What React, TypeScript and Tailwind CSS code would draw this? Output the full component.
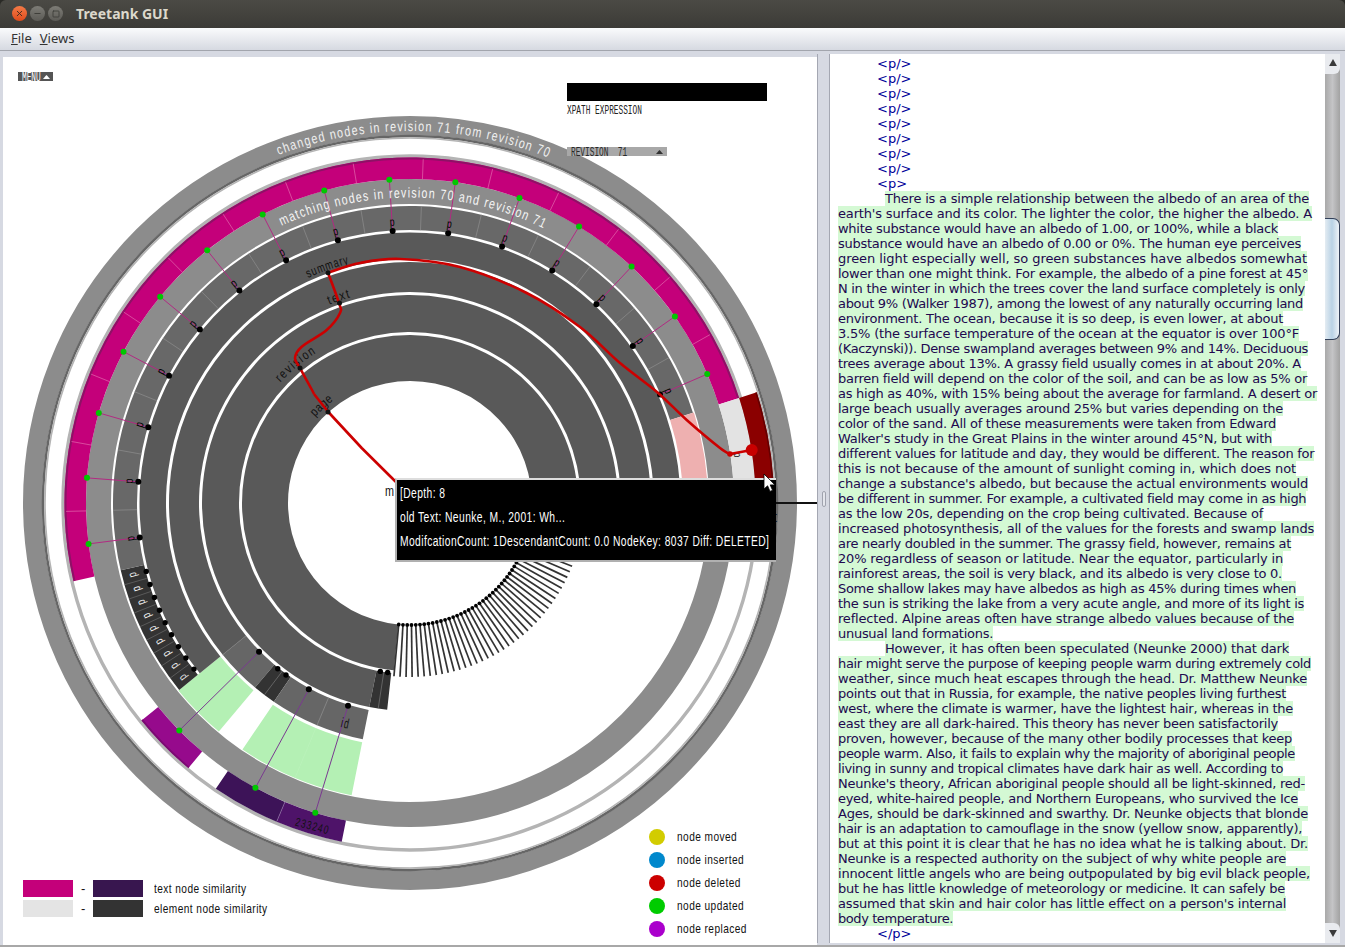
import React, { useLayoutEffect, useRef } from "react";
import { X, Minus, Square } from "lucide-react";

const NARROW = "font-['Liberation_Sans',sans-serif]";
const CX = 410;
const CY = 503;

function pt(r: number, t: number): [number, number] {
  const a = (t * Math.PI) / 180;
  return [CX + r * Math.sin(a), CY - r * Math.cos(a)];
}
function sector(r1: number, r2: number, a: number, b: number) {
  const large = b - a > 180 ? 1 : 0;
  const [x1, y1] = pt(r2, a);
  const [x2, y2] = pt(r2, b);
  const [x3, y3] = pt(r1, b);
  const [x4, y4] = pt(r1, a);
  return `M${x1} ${y1}A${r2} ${r2} 0 ${large} 1 ${x2} ${y2}L${x3} ${y3}A${r1} ${r1} 0 ${large} 0 ${x4} ${y4}Z`;
}
function smooth(p: [number, number][]) {
  let d = `M${p[0][0]} ${p[0][1]}`;
  for (let i = 0; i < p.length - 1; i++) {
    const p0 = p[Math.max(i - 1, 0)];
    const p1 = p[i];
    const p2 = p[i + 1];
    const p3 = p[Math.min(i + 2, p.length - 1)];
    d += `C${p1[0] + (p2[0] - p0[0]) / 6} ${p1[1] + (p2[1] - p0[1]) / 6} ${p2[0] - (p3[0] - p1[0]) / 6} ${p2[1] - (p3[1] - p1[1]) / 6} ${p2[0]} ${p2[1]}`;
  }
  return d;
}

function Sector({ r1, r2, a, b, fill }: { r1: number; r2: number; a: number; b: number; fill: string }) {
  return <path d={sector(r1, r2, a, b)} fill={fill} />;
}
function Radial({ r1, r2, t, stroke, w = 0.7 }: { r1: number; r2: number; t: number; stroke: string; w?: number }) {
  const [x1, y1] = pt(r1, t);
  const [x2, y2] = pt(r2, t);
  return <line x1={x1} y1={y1} x2={x2} y2={y2} stroke={stroke} strokeWidth={w} />;
}
function Dot({ r, t, size = 3, fill = "#000" }: { r: number; t: number; size?: number; fill?: string }) {
  const [x, y] = pt(r, t);
  return <circle cx={x} cy={y} r={size} fill={fill} />;
}
function RadialLabel({ r, t, text, fill = "#000", size = 12 }: { r: number; t: number; text: string; fill?: string; size?: number }) {
  const [x, y] = pt(r, t);
  return (
    <text
      fill={fill}
      fontSize={size}
      textAnchor="middle"
      dominantBaseline="middle"
      transform={`translate(${x} ${y}) rotate(${t}) scale(0.72 1)`}
      className={NARROW}
    >
      {text}
    </text>
  );
}
function ArcText({ id, text, r, c, size, fill, spacing, len }: { id: string; text: string; r: number; c: number; size: number; fill: string; spacing: number; len: number }) {
  const [x1, y1] = pt(r, c - 80);
  const [x2, y2] = pt(r, c + 80);
  const start = (r * 80 * Math.PI) / 180 - len / 2;
  return (
    <>
      <defs>
        <path id={id} d={`M${x1} ${y1}A${r} ${r} 0 0 1 ${x2} ${y2}`} />
      </defs>
      <text fill={fill} fontSize={size} style={{ letterSpacing: spacing }} className={NARROW}>
        <textPath href={`#${id}`} startOffset={start} textLength={len} lengthAdjust="spacingAndGlyphs">
          {text}
        </textPath>
      </text>
    </>
  );
}

const START = 256.9;
const STEP = 11.7;
const cellIdx = Array.from({ length: 15 }, (_, k) => k);
const smallStep = (256.9 - 231) / 9;
const smallIdx = Array.from({ length: 9 }, (_, k) => k);
const fan = Array.from({ length: 41 }, (_, k) => 185.3 - 2 * k);

function Chart() {
  return (
    <svg viewBox="3 57 814 888" width={814} height={888} className="absolute inset-0">
      {/* outer ring */}
      <circle cx={CX} cy={CY} r={377.5} fill="none" stroke="#8c8c8c" strokeWidth={19} />
      <circle cx={CX} cy={CY} r={367} fill="none" stroke="#666666" strokeWidth={2.5} />
      <circle cx={CX} cy={CY} r={365} fill="none" stroke="#b4b4b4" strokeWidth={1.6} />
      {/* grey edge line */}
      <circle cx={CX} cy={CY} r={347} fill="none" stroke="#b4b4b4" strokeWidth={3.4} />
      {/* r5 */}
      <circle cx={CX} cy={CY} r={311.5} fill="none" stroke="#8c8c8c" strokeWidth={25} />

      {/* magenta band */}
      <Sector r1={324} r2={345.5} a={START} b={432.3} fill="#c4007a" />
      <Sector r1={343.5} r2={345.5} a={START} b={432.3} fill="#8e1166" />
      <Sector r1={324} r2={345.5} a={72.3} b={98} fill="#e3e3e3" />
      <Sector r1={345.5} r2={364} a={72.3} b={98} fill="#8b0000" />
      <Sector r1={362.4} r2={364} a={72.3} b={98} fill="#640000" />
      <Sector r1={324} r2={345.5} a={219.9} b={231} fill="#960a8c" />
      <Sector r1={343.8} r2={345.5} a={219.9} b={231} fill="#7a0a72" />
      <Sector r1={324} r2={345.5} a={202.7} b={214.2} fill="#3d1358" />
      <Sector r1={324} r2={345.5} a={191.4} b={202.7} fill="#4e1369" />
      <Radial r1={324} r2={345} t={202.7} stroke="#8a6aa0" />

      {/* rings */}
      <Sector r1={244} r2={298} a={219.9} b={231} fill="#b4f0b4" />
      <Sector r1={244} r2={298} a={191.3} b={214.2} fill="#b4f0b4" />
      <Sector r1={273} r2={297} a={231} b={START} fill="#333333" />
      <Sector r1={273} r2={297} a={START} b={432.3} fill="#686868" />
      <Sector r1={273} r2={298} a={72.3} b={100} fill="#eeb0b0" />
      <Sector r1={244} r2={270.5} a={231} b={460} fill="#595959" />
      <Sector r1={211} r2={241} a={231} b={460} fill="#595959" />
      <Sector r1={211} r2={241} a={220} b={231} fill="#666666" />
      <Sector r1={211} r2={241} a={214.4} b={220} fill="#333333" />
      <Sector r1={211} r2={241} a={191.3} b={214.4} fill="#666666" />
      <Radial r1={211} r2={241} t={202.7} stroke="#909090" />
      <Radial r1={211} r2={241} t={217.2} stroke="#777777" />
      <Radial r1={211} r2={241} t={231} stroke="#777777" />
      <Sector r1={171} r2={208} a={191.3} b={460} fill="#595959" />
      <Sector r1={171} r2={208} a={186.3} b={191.3} fill="#333333" />
      <Radial r1={171} r2={208} t={188.8} stroke="#777777" />
      <Sector r1={122} r2={168} a={185.5} b={465} fill="#595959" />
      <Radial r1={244} r2={298} t={225.4} stroke="#bcf2bc" />
      <Radial r1={244} r2={298} t={202.7} stroke="#bcf2bc" />

      {/* fan */}
      {fan.map((t) => (
        <g key={t}>
          <Radial r1={122} r2={174} t={t} stroke="#333333" w={1.7} />
          <Dot r={122} t={t} size={1.9} />
        </g>
      ))}
      <Dot r={171} t={190} size={2.7} />
      <Dot r={171} t={187.5} size={2.7} />

      {/* separators */}
      {Array.from({ length: 14 }, (_, k) => START + STEP * (k + 1)).map((t) => (
        <g key={t}>
          <Radial r1={273} r2={297} t={t} stroke="#8e8e8e" />
          <Radial r1={324} r2={344} t={t} stroke="#e268ae" />
        </g>
      ))}
      {smallIdx.slice(1).map((k) => (
        <Radial key={k} r1={274} r2={297} t={231 + k * smallStep} stroke="#6a6a6a" />
      ))}

      {/* connections */}
      {cellIdx.map((k) => {
        const t = START + STEP * (k + 0.5);
        const [x1, y1] = pt(272.5, t);
        const [x2, y2] = pt(324, t);
        return (
          <g key={k}>
            <line x1={x1} y1={y1} x2={x2} y2={y2} stroke="#b22a82" strokeWidth={1} />
            <RadialLabel r={281} t={t} text="p" />
            <Dot r={272.5} t={t} />
            <Dot r={324} t={t} fill="#00c800" />
          </g>
        );
      })}
      {smallIdx.map((k) => {
        const t = 231 + (k + 0.5) * smallStep;
        return (
          <g key={k}>
            <RadialLabel r={286} t={t} text="p" fill="#eeeeee" />
            <Dot r={272.5} t={t} size={2.7} />
          </g>
        );
      })}
      {[225.4, 208.5, 197].map((t) => (
        <g key={t}>
          <Radial r1={212} r2={324} t={t} stroke="#7a3a90" w={1} />
          <Dot r={212} t={t} />
          <Dot r={324} t={t} fill="#00c800" />
        </g>
      ))}
      <Dot r={212} t={218.6} size={2.7} />
      <Dot r={212} t={215.8} size={2.7} />

      {/* labels */}
      <ArcText id="a1" text="changed nodes in revision 71  from revision 70" r={372} c={0.6} size={14} fill="#f0f0f0" spacing={1.6} len={277} />
      <ArcText id="a2" text="matching nodes in revision 70 and revision 71" r={305.5} c={0.6} size={14} fill="#f6f6f6" spacing={1.6} len={272} />
      <ArcText id="a3" text="summary" r={247} c={-19.3} size={13} fill="#111" spacing={1.2} len={44} />
      <ArcText id="a4" text="text" r={214} c={-19} size={13} fill="#111" spacing={2} len={24} />
      <ArcText id="a5" text="revision" r={177} c={-39.4} size={13} fill="#111" spacing={2} len={48} />
      <ArcText id="a6" text="page" r={128} c={-42.3} size={13} fill="#111" spacing={0.8} len={25.5} />
      <text x={341} y={728} fontSize={14} fill="#111" transform="rotate(12 345 724)" className={NARROW} style={{ letterSpacing: 2 }} textLength={9} lengthAdjust="spacingAndGlyphs">
        id
      </text>
      <text x={295} y={830} fontSize={12} fill="#111" transform="rotate(15 312 826)" className={NARROW} style={{ letterSpacing: 1.6 }} textLength={35} lengthAdjust="spacingAndGlyphs">
        233240
      </text>
      <text x={385} y={496} fontSize={14} fill="#111" className={NARROW} textLength={9} lengthAdjust="spacingAndGlyphs">
        m
      </text>
      <text x={773} y={522} fontSize={14} fill="#111" className={NARROW}>
        t
      </text>
      <text fontSize={11} fill="#111" textAnchor="middle" dominantBaseline="middle" transform="translate(737 455) rotate(83) scale(0.72 1)" className={NARROW}>
        p
      </text>
      <line x1={770} y1={503} x2={817} y2={503} stroke="#111" strokeWidth={2} />

      {/* red path */}
      <g fill="none" stroke="#cc0000" strokeWidth={2.6} strokeLinejoin="round">
        <path d="M400 486L361.7 448L328.3 412L314 394" />
        <path
          d={smooth([
            [314, 394],
            [312, 390],
            [300, 368],
            [295, 358],
            [301.7, 346.7],
            [326.7, 330],
            [340, 313],
            [339, 303],
            [328, 272.7],
          ])}
        />
        <path
          d={smooth([
            [328, 272.7],
            [360, 263],
            [400, 259],
            [460, 267],
            [526.7, 293],
            [580, 327],
            [620, 363],
            [656.7, 391.7],
            [686.7, 420],
            [720, 448],
            [730, 454],
          ])}
        />
        <path d="M730 454L751.7 450" />
      </g>
      <circle cx={751.7} cy={450} r={6} fill="#c80000" />
      <circle cx={730} cy={454} r={2.8} fill="#cc0000" />
      <circle cx={328} cy={272.7} r={2.5} fill="#111" />
      <circle cx={339.5} cy={303} r={2.5} fill="#111" />
      <circle cx={300} cy={368} r={2.5} fill="#111" />
      <circle cx={328} cy={412} r={2.5} fill="#111" />
    </svg>
  );
}

function Caret({ fill = "#fff" }: { fill?: string }) {
  return (
    <svg width={7} height={4} viewBox="0 0 7 4">
      <path d="M0 4L2.5 1L3.5 0L4.5 1L7 4Z" fill={fill} />
    </svg>
  );
}

const mono = "block font-['Liberation_Mono',monospace] text-[12px] origin-left scale-x-[0.65] translate-y-[2px] whitespace-pre leading-[9px]";
const squeeze = "inline-block origin-left scale-x-[0.78] whitespace-pre";
const squeezeTip = "block origin-left scale-x-[0.735] whitespace-pre";

const legend2: [string, string][] = [
  ["#d2cc00", "node moved"],
  ["#0088cc", "node inserted"],
  ["#cc0000", "node deleted"],
  ["#00cc00", "node updated"],
  ["#aa00cc", "node replaced"],
];

function Canvas() {
  return (
    <div className="relative ml-[3px] mt-[6px] h-[888px] w-[814px] shrink-0 overflow-hidden bg-white">
      <Chart />

      <div className="absolute left-[15px] top-[15px] flex h-[9px] w-[35px] items-center bg-[#555555] pl-[4px] text-white">
        <span className={`${mono} w-[21px] shrink-0`}>MENU</span>
        <Caret />
      </div>

      <div className="absolute left-[564px] top-[26px] flex w-[200px] flex-col">
        <div className="h-[18px] bg-black" />
        <div className="mt-[4px] h-[9px] text-[#222]">
          <span className={mono}>XPATH EXPRESSION</span>
        </div>
      </div>

      <div className="absolute left-[564px] top-[90px] flex h-[9px] w-[100px] items-center justify-between bg-[#a8a8a8] pl-[4px] pr-[4px] text-[#2a2a2a]">
        <span className={`${mono} w-[60px] shrink-0`}>REVISION  71</span>
        <Caret fill="#333" />
      </div>

      <div
        className={`absolute left-[392px] top-[421px] flex h-[84px] w-[381px] flex-col border-b-2 border-l-2 border-t-2 border-b-[#b0b0b0] border-l-[#b0b0b0] border-t-[#dddddd] bg-black pl-[3px] text-[14px] leading-[24px] tracking-[0.55px] text-white ${NARROW}`}
      >
        <div className="h-[24px] w-[360px] pt-[1px]">
          <span className={squeezeTip}>[Depth: 8</span>
        </div>
        <div className="h-[24px] w-[360px] pt-[1px]">
          <span className={squeezeTip}>old Text: Neunke, M., 2001: Wh...</span>
        </div>
        <div className="h-[24px] w-[360px] pt-[1px]">
          <span className={squeezeTip}>ModifcationCount: 1DescendantCount: 0.0 NodeKey: 8037 Diff: DELETED]</span>
        </div>
      </div>

      <svg width={14} height={20} viewBox="0 0 14 20" className="absolute left-[760px] top-[416px]">
        <path d="M1 1V16L4.6 12.8L7 18.4L9.6 17.3L7.2 11.9H12Z" fill="#fff" stroke="#000" strokeWidth={0.8} />
      </svg>

      <div className={`absolute left-[20px] top-[823px] flex flex-col gap-[3px] text-[13px] tracking-[0.55px] text-[#111] ${NARROW}`}>
        {[
          ["#c4007a", "#38164f", "text node similarity"],
          ["#e4e4e4", "#333333", "element node similarity"],
        ].map(([a, b, t]) => (
          <div key={t} className="flex h-[17px] items-center">
            <div className="h-[17px] w-[50px] shrink-0" style={{ backgroundColor: a }} />
            <div className="w-[20px] shrink-0 pl-[1px] text-center">-</div>
            <div className="h-[17px] w-[50px] shrink-0" style={{ backgroundColor: b }} />
            <div className="ml-[11px] shrink-0">
              <span className={squeeze}>{t}</span>
            </div>
          </div>
        ))}
      </div>

      <div className={`absolute left-[646px] top-[772px] flex flex-col gap-[7px] text-[13px] tracking-[0.55px] text-[#111] ${NARROW}`}>
        {legend2.map(([c, t]) => (
          <div key={t} className="flex h-[16px] items-center gap-[12px]">
            <div className="h-[16px] w-[16px] rounded-full" style={{ backgroundColor: c }} />
            <span className={squeeze}>{t}</span>
          </div>
        ))}
      </div>
    </div>
  );
}

const tags = ["<p/>", "<p/>", "<p/>", "<p/>", "<p/>", "<p/>", "<p/>", "<p/>", "<p>"];
// each line with the x at which it ends in the picture
const para1: [string, number][] = [
  ["There is a simple relationship between the albedo of an area of the", 1309],
  ["earth's surface and its color. The lighter the color, the higher the albedo. A", 1312],
  ["white substance would have an albedo of 1.00, or 100%, while a black", 1278],
  ["substance would have an albedo of 0.00 or 0%. The human eye perceives", 1301],
  ["green light especially well, so green substances have albedos somewhat", 1307],
  ["lower than one might think. For example, the albedo of a pine forest at 45°", 1308],
  ["N in the winter in which the trees cover the land surface completely is only", 1305],
  ["about 9% (Walker 1987), among the lowest of any naturally occurring land", 1303],
  ["environment. The ocean, because it is so deep, is even lower, at about", 1283],
  ["3.5% (the surface temperature of the ocean at the equator is over 100°F", 1299],
  ["(Kaczynski)). Dense swampland averages between 9% and 14%. Deciduous", 1308],
  ["trees average about 13%. A grassy field usually comes in at about 20%. A", 1301],
  ["barren field will depend on the color of the soil, and can be as low as 5% or", 1307],
  ["as high as 40%, with 15% being about the average for farmland. A desert or", 1317],
  ["large beach usually averages around 25% but varies depending on the", 1283],
  ["color of the sand. All of these measurements were taken from Edward", 1276],
  ["Walker's study in the Great Plains in the winter around 45°N, but with", 1272],
  ["different values for latitude and day, they would be different. The reason for", 1314],
  ["this is not because of the amount of sunlight coming in, which does not", 1296],
  ["change a substance's albedo, but because the actual environments would", 1308],
  ["be different in summer. For example, a cultivated field may come in as high", 1306],
  ["as the low 20s, depending on the crop being cultivated. Because of", 1263],
  ["increased photosynthesis, all of the values for the forests and swamp lands", 1314],
  ["are nearly doubled in the summer. The grassy field, however, remains at", 1291],
  ["20% regardless of season or latitude. Near the equator, particularly in", 1283],
  ["rainforest areas, the soil is very black, and its albedo is very close to 0.", 1282],
  ["Some shallow lakes may have albedos as high as 45% during times when", 1296],
  ["the sun is striking the lake from a very acute angle, and more of its light is", 1304],
  ["reflected. Alpine areas often have strange albedo values because of the", 1294],
  ["unusual land formations.", 993],
];
const para2: [string, number][] = [
  ["However, it has often been speculated (Neunke 2000) that dark", 1289],
  ["hair might serve the purpose of keeping people warm during extremely cold", 1311],
  ["weather, since much heat escapes through the head. Dr. Matthew Neunke", 1307],
  ["points out that in Russia, for example, the native peoples living furthest", 1286],
  ["west, where the climate is warmer, have the lightest hair, whereas in the", 1293],
  ["east they are all dark-haired. This theory has never been satisfactorily", 1278],
  ["proven, however, because of the many other bodily processes that keep", 1292],
  ["people warm. Also, it fails to explain why the majority of aboriginal people", 1295],
  ["living in sunny and tropical climates have dark hair as well. According to", 1283],
  ["Neunke's theory, African aboriginal people should all be light-skinned, red-", 1305],
  ["eyed, white-haired people, and Northern Europeans, who survived the Ice", 1298],
  ["Ages, should be dark-skinned and swarthy. Dr. Neunke objects that blonde", 1308],
  ["hair is an adaptation to camouflage in the snow (yellow snow, apparently),", 1302],
  ["but at this point it is clear that he has no idea what he is talking about. Dr.", 1308],
  ["Neunke is a respected authority on the subject of why white people are", 1286],
  ["innocent little angels who are being outpopulated by big evil black people,", 1310],
  ["but he has little knowledge of meteorology or medicine. It can safely be", 1285],
  ["assumed that skin and hair color has little effect on a person's internal", 1286],
  ["body temperature.", 953],
];

function TextLine({ text, end, indent }: { text: string; end: number; indent?: boolean }) {
  const ref = useRef<HTMLSpanElement>(null);
  useLayoutEffect(() => {
    const el = ref.current;
    if (!el) return;
    el.style.letterSpacing = "0px";
    const natural = el.getBoundingClientRect().width;
    const target = end - (indent ? 885 : 838);
    el.style.letterSpacing = `${(target - natural) / text.length}px`;
  }, [text, end, indent]);
  return (
    <div className={`h-[15px] whitespace-pre leading-[15px] ${indent ? "pl-[47px]" : ""}`}>
      <span ref={ref} className="inline-block h-[15px] bg-[#d4f9d4] text-[#21084f]">
        {text}
      </span>
    </div>
  );
}

function TextPane() {
  return (
    <div className="h-[889px] w-[495px] shrink-0 overflow-hidden bg-white pl-[8px] pt-[2px] font-['DejaVu_Sans',sans-serif] text-[13px]">
      {tags.map((t, i) => (
        <div key={i} className="h-[15px] pl-[39px] leading-[15px] text-[#000099]">
          {t}
        </div>
      ))}
      {para1.map(([l, e], i) => (
        <TextLine key={i} text={l} end={e} indent={i === 0} />
      ))}
      {para2.map(([l, e], i) => (
        <TextLine key={i} text={l} end={e} indent={i === 0} />
      ))}
      <div className="h-[15px] pl-[39px] leading-[15px] text-[#000099]">{"</p>"}</div>
    </div>
  );
}

function Arrow({ up }: { up: boolean }) {
  return (
    <svg width={8} height={7} viewBox="0 0 9 8">
      <path d={up ? "M4.5 0L9 8H0Z" : "M0 0H9L4.5 8Z"} fill="#3a3a3a" />
    </svg>
  );
}

function ScrollBar() {
  return (
    <div className="flex h-[889px] w-[15px] shrink-0 flex-col bg-gradient-to-r from-[#a9a9a9] via-[#c4c4c6] to-[#a2a2a2]">
      <div className="flex h-[20px] items-center justify-center rounded-br-[6px] bg-[#e9ebef] pb-[3px]">
        <Arrow up />
      </div>
      <div className="ml-0 mt-[144px] h-[122px] w-[15px] rounded-r-[7px] border-y border-r border-[#33415a] bg-gradient-to-r from-[#e4ecf2] via-[#b9d2e5] to-[#eef3f8]" />
      <div className="flex-1" />
      <div className="flex h-[20px] items-center justify-center rounded-tr-[6px] bg-[#e9ebef]">
        <Arrow up={false} />
      </div>
    </div>
  );
}

function Splitter() {
  return (
    <div className="flex h-[889px] w-[13px] shrink-0 items-center justify-center border-x border-[#a4a7b2]">
      <div className="h-[16px] w-[4px] rounded-[2px] border border-[#a0a3ae] bg-[#e4e6ec]" />
    </div>
  );
}

export default function App() {
  return (
    <div className="flex h-[947px] w-[1345px] flex-col overflow-hidden bg-[#2a2a26] font-['DejaVu_Sans',sans-serif]">
      <div className="flex h-[28px] shrink-0 items-center rounded-t-[6px] bg-gradient-to-b from-[#4b4a45] to-[#3c3b37] pb-[1px] pl-[12px]">
        <div className="flex h-[15px] w-[15px] items-center justify-center rounded-full bg-gradient-to-b from-[#f47a46] to-[#df4a1a] text-[#3a2a20]">
          <X size={9} strokeWidth={2.4} />
        </div>
        <div className="ml-[3px] flex h-[15px] w-[15px] items-center justify-center rounded-full bg-gradient-to-b from-[#7d7c76] to-[#5c5b56] text-[#3a3a36]">
          <Minus size={9} strokeWidth={2.4} />
        </div>
        <div className="ml-[3px] flex h-[15px] w-[15px] items-center justify-center rounded-full bg-gradient-to-b from-[#7d7c76] to-[#5c5b56] text-[#3a3a36]">
          <Square size={8} strokeWidth={2.4} />
        </div>
        <div className="ml-[13px] font-['Noto_Sans',sans-serif] text-[14px] font-bold leading-none text-[#dcd8cc]">Treetank GUI</div>
      </div>
      <div className="flex h-[23px] shrink-0 items-center gap-[8px] border-b border-[#a2a5ad] bg-gradient-to-b from-[#fafbfc] to-[#d6d9e1] pl-[11px] font-['Noto_Sans',sans-serif] text-[13px] text-[#333]">
        <span>
          <span className="underline">F</span>ile
        </span>
        <span>
          <span className="underline">V</span>iews
        </span>
      </div>
      <div className="flex min-h-0 flex-1 items-start border-b-2 border-[#a8a8a8] bg-[#d6d9e2]">
        <Canvas />
        <div className="mt-[3px] flex">
          <Splitter />
          <TextPane />
          <ScrollBar />
        </div>
      </div>
    </div>
  );
}
